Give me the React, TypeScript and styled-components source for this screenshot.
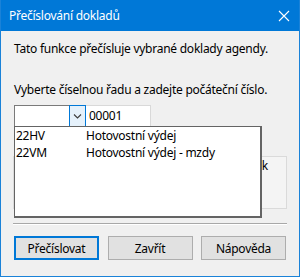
import React from "react";
import styled, { createGlobalStyle } from "styled-components";

const Global = createGlobalStyle`
	html, body {
		margin: 0;
		padding: 0;
		background: #ffffff;
	}
	body {
		font-family: "Noto Sans", "Open Sans", sans-serif;
		font-size: 12px;
		letter-spacing: -0.25px;
		color: #000000;
	}
`;

const Window = styled.div`
	width: 300px;
	height: 277px;
	box-sizing: border-box;
	border: 1px solid #1a82d8;
	border-top: none;
	display: flex;
	flex-direction: column;
	background: #f0f0f0;
`;

const TitleBar = styled.div`
	height: 31px;
	flex: none;
	background: #0078d7;
	color: #ffffff;
	display: flex;
	align-items: center;
	justify-content: space-between;
	padding: 0 9px 0 8px;
	font-size: 12px;
`;

const Body = styled.div`
	flex: 1;
	display: flex;
	flex-direction: column;
	padding: 0 12px;
	position: relative;
`;

const Label = styled.div<{ top: number }>`
	margin-top: ${({ top }) => top}px;
	line-height: 16px;
	padding-left: 1px;
`;

const InputRow = styled.div`
	margin-top: 7px;
	display: flex;
	height: 22px;
	padding-left: 1px;
	position: relative;
`;

const Combo = styled.div`
	width: 72px;
	height: 22px;
	box-sizing: border-box;
	background: #ffffff;
	border: 1px solid #7a7a7a;
	display: flex;
	justify-content: flex-end;
`;

const DropButton = styled.div`
	width: 17px;
	height: 22px;
	margin: -1px -1px 0 0;
	box-sizing: border-box;
	background: #e5f1fb;
	border: 1px solid #0078d7;
	display: flex;
	align-items: center;
	justify-content: center;
`;

const Edit = styled.div`
	width: 65px;
	height: 22px;
	box-sizing: border-box;
	background: #ffffff;
	border: 1px solid #d9d9d9;
	border-left: none;
	padding: 2px 0 0 3px;
	line-height: 16px;
`;

const DropList = styled.div`
	position: absolute;
	left: 1px;
	top: 21px;
	width: 248px;
	height: 92px;
	box-sizing: border-box;
	background: #ffffff;
	border: 1px solid #646464;
	border-right-width: 2px;
	border-bottom-width: 2px;
	z-index: 2;
	padding-top: 1px;
`;

const Option = styled.div`
	display: flex;
	height: 17px;
	line-height: 16px;
	padding-left: 1px;
`;

const Code = styled.span`
	width: 70px;
`;

const Panel = styled.div`
	margin-top: 29px;
	height: 53px;
	box-sizing: border-box;
	border: 1px solid #dadada;
	background: #f4f4f4;
	display: flex;
	justify-content: flex-end;
	padding: 1px 18px 0 0;
	line-height: 16px;
`;

const Separator = styled.div`
	margin-top: 14px;
	height: 1px;
	background: #a8a8a8;
	border-bottom: 1px solid #ffffff;
`;

const Buttons = styled.div`
	margin-top: 11px;
	display: flex;
	justify-content: space-between;
	padding: 0 1px;
`;

const Button = styled.div<{ primary?: boolean }>`
	width: 85px;
	height: 24px;
	box-sizing: border-box;
	background: #e1e1e1;
	border: ${({ primary }) => (primary ? "2px solid #0078d7" : "1px solid #adadad")};
	display: flex;
	align-items: center;
	justify-content: center;
`;

function Close() {
	return (
		<svg width="12" height="12" viewBox="0 0 12 12">
			<path d="M1 1L11 11M11 1L1 11" stroke="#ffffff" strokeWidth="1.1" fill="none" />
		</svg>
	);
}

function Chevron() {
	return (
		<svg width="9" height="6" viewBox="0 0 9 6">
			<path d="M1 1.5L4.5 5L8 1.5" stroke="#3c3c3c" strokeWidth="1.1" fill="none" />
		</svg>
	);
}

export default function App() {
	return (
		<>
			<Global />
			<Window>
				<TitleBar>
					<span>Přečíslování dokladů</span>
					<Close />
				</TitleBar>
				<Body>
					<Label top={10}>Tato funkce přečísluje vybrané doklady agendy.</Label>
					<Label top={25}>Vyberte číselnou řadu a zadejte počáteční číslo.</Label>
					<InputRow>
						<Combo>
							<DropButton>
								<Chevron />
							</DropButton>
						</Combo>
						<Edit>00001</Edit>
						<DropList>
							<Option>
								<Code>22HV</Code>
								<span>Hotovostní výdej</span>
							</Option>
							<Option>
								<Code>22VM</Code>
								<span>Hotovostní výdej - mzdy</span>
							</Option>
						</DropList>
					</InputRow>
					<Panel>Zámek</Panel>
					<Separator />
					<Buttons>
						<Button primary>Přečíslovat</Button>
						<Button>Zavřít</Button>
						<Button>Nápověda</Button>
					</Buttons>
				</Body>
			</Window>
		</>
	);
}
